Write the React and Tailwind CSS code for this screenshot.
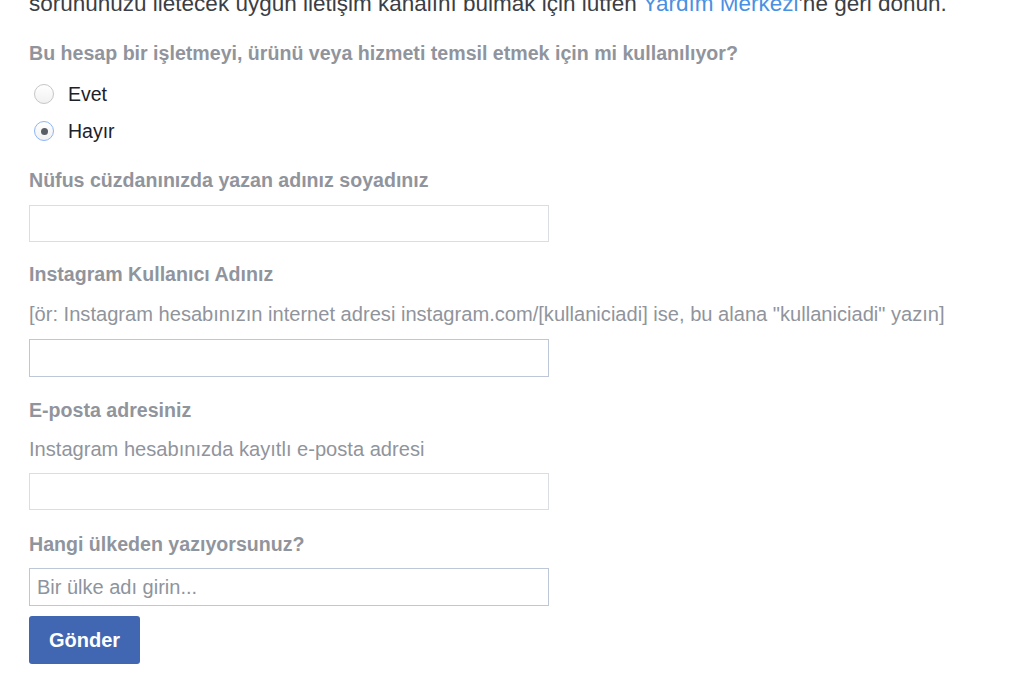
import React from "react";

const font = { fontFamily: '"Liberation Sans", Arial, sans-serif' };

function Label({ children, className = "" }) {
  return (
    <div className={"text-[19.6px] leading-[24px] font-bold text-[#90949c] whitespace-nowrap " + className}>
      {children}
    </div>
  );
}

function Hint({ children, className = "" }) {
  return (
    <div className={"text-[20.1px] leading-[24px] text-[#90949c] whitespace-nowrap " + className}>
      {children}
    </div>
  );
}

function Input({ className = "", placeholder = "" }) {
  return (
    <input
      type="text"
      placeholder={placeholder}
      className={
        "block w-[520px] bg-white border outline-none px-[7px] text-[20px] text-[#1d2129] placeholder:text-[#8d949e] " +
        className
      }
    />
  );
}

function Radio({ checked, label }) {
  return (
    <label className="flex items-center h-[24px]">
      <span
        className={
          "ml-[5px] w-[20px] h-[20px] rounded-full border flex items-center justify-center bg-gradient-to-b from-white to-[#f1f1f1] " +
          (checked ? "border-[#8db4f6]" : "border-[#c6c6c6]")
        }
      >
        {checked && <span className="w-[7px] h-[7px] rounded-full bg-[#595d66]" />}
      </span>
      <span className="ml-[14px] text-[19.5px] leading-[24px] text-[#1d2129]">{label}</span>
    </label>
  );
}

export default function App() {
  return (
    <div className="bg-white min-h-[697px] overflow-hidden pl-[29px]" style={font}>
      <p className="mt-[-10px] text-[22.5px] leading-[28px] text-[#3b3e44] whitespace-nowrap">
        sorununuzu iletecek uygun iletişim kanalını bulmak için lütfen{" "}
        <span className="text-[#4a90e2]">Yardım Merkezi</span>'ne geri dönün.
      </p>

      <Label className="mt-[23px]">
        Bu hesap bir işletmeyi, ürünü veya hizmeti temsil etmek için mi kullanılıyor?
      </Label>

      <div className="mt-[17px] flex flex-col gap-[13px]">
        <Radio label="Evet" />
        <Radio checked label="Hayır" />
      </div>

      <Label className="mt-[25px]">Nüfus cüzdanınızda yazan adınız soyadınız</Label>
      <Input className="mt-[13px] h-[37px] border-[#dadde1]" />

      <Label className="mt-[20px]">Instagram Kullanıcı Adınız</Label>
      <Hint className="mt-[16px]">
        [ör: Instagram hesabınızın internet adresi instagram.com/[kullaniciadi] ise, bu alana "kullaniciadi" yazın]
      </Hint>
      <Input className="mt-[13px] h-[38px] border-[#bdc7d8]" />

      <Label className="mt-[21px]">E-posta adresiniz</Label>
      <Hint className="mt-[15px]">Instagram hesabınızda kayıtlı e-posta adresi</Hint>
      <Input className="mt-[12px] h-[37px] border-[#dadde1]" />

      <Label className="mt-[22px]">Hangi ülkeden yazıyorsunuz?</Label>
      <Input className="mt-[12px] h-[38px] border-[#bdc7d8]" placeholder="Bir ülke adı girin..." />

      <button className="block mt-[10px] w-[111px] h-[48px] rounded-[3px] bg-[#4267b2] text-white text-[20px] font-bold">
        Gönder
      </button>
    </div>
  );
}
